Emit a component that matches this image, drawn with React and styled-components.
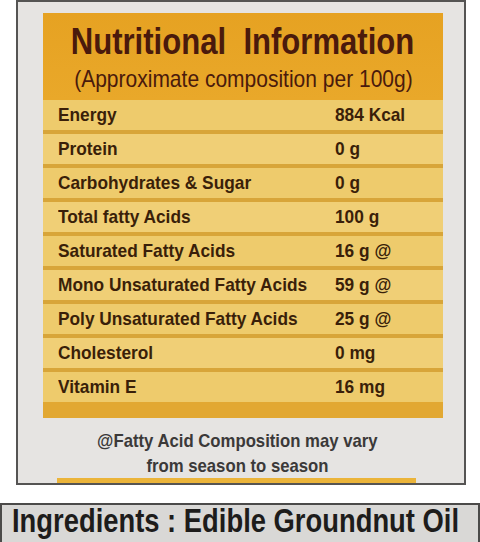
import React from 'react';
import styled, { createGlobalStyle } from 'styled-components';

const GlobalStyle = createGlobalStyle`
    body {
        margin: 0;
        background: #ffffff;
        font-family: "Liberation Sans", Arial, sans-serif;
        overflow: hidden;
    }
`;

const Page = styled.div`
    width: 480px;
    height: 542px;
    overflow: hidden;
`;

const Card = styled.div`
    margin-left: 16px;
    width: 450px;
    box-sizing: border-box;
    border: 2px solid #555453;
    background: #e6e4e2;
    padding-top: 11px;
    display: flex;
    flex-direction: column;
`;

const Panel = styled.div`
    margin-left: 25px;
    width: 400px;
    display: flex;
    flex-direction: column;
`;

const Header = styled.div`
    height: 87px;
    box-sizing: border-box;
    padding-top: 9px;
    background: linear-gradient(180deg, #e6a222 0%, #e9a82a 100%);
    color: #4a1a0c;
    display: flex;
    flex-direction: column;
    align-items: center;
`;

const Squeeze = styled.span`
    display: inline-block;
    white-space: pre;
    transform: scaleX(${p => p.$x});
    transform-origin: ${p => p.$origin || 'center'};
`;

const Title = styled.div`
    font-size: 37px;
    line-height: 40px;
    font-weight: 700;
`;

const Subtitle = styled.div`
    margin-top: 3px;
    font-size: 24px;
    line-height: 28px;
    font-weight: 400;
`;

const Rows = styled.div`
    display: flex;
    flex-direction: column;
    background: #eecb6b;
`;

const Row = styled.div`
    display: grid;
    grid-template-columns: 277px 1fr;
    height: 30px;
    padding-left: 15px;
    font-size: 19px;
    line-height: 30px;
    font-weight: 700;
    color: #3a1f09;
    background: ${p => (p.$light ? '#f0cf76' : '#eecb6c')};
    & + & {
        border-top: 4px solid #d8a539;
    }
`;

const BottomBand = styled.div`
    height: 16px;
    background: #e2a832;
`;

const Note = styled.div`
    margin-top: 10px;
    padding-right: 8px;
    display: flex;
    flex-direction: column;
    align-items: center;
    font-size: 19px;
    line-height: 25px;
    font-weight: 700;
    color: #3b3939;
`;

const Strip = styled.div`
    margin-left: 39px;
    width: 359px;
    height: 5px;
    background: #ebb43a;
`;

const Ingredients = styled.div`
    margin-top: 18px;
    width: 480px;
    box-sizing: border-box;
    border: 2px solid #4b4a49;
    background: #d9d8d6;
    padding: 0 0 10px 10px;
    font-size: 34px;
    line-height: 30px;
    font-weight: 700;
    color: #1d1c1b;
`;

const nutrients = [
    ['Energy', '884 Kcal'],
    ['Protein', '0 g'],
    ['Carbohydrates & Sugar', '0 g'],
    ['Total fatty Acids', '100 g'],
    ['Saturated Fatty Acids', '16 g @'],
    ['Mono Unsaturated Fatty Acids', '59 g @'],
    ['Poly Unsaturated Fatty Acids', '25 g @'],
    ['Cholesterol', '0 mg'],
    ['Vitamin E', '16 mg'],
];

export default function App() {
    return (
        <Page>
            <GlobalStyle />
            <Card>
                <Panel>
                    <Header>
                        <Title><Squeeze $x={0.84}>{'Nutritional  Information'}</Squeeze></Title>
                        <Subtitle><Squeeze $x={0.875}>(Approximate composition per 100g)</Squeeze></Subtitle>
                    </Header>
                    <Rows>
                        {nutrients.map(([label, value], i) => (
                            <Row key={label} $light={i % 2 === 1}>
                                <Squeeze $x={0.91} $origin="left">{label}</Squeeze>
                                <Squeeze $x={0.91} $origin="left">{value}</Squeeze>
                            </Row>
                        ))}
                    </Rows>
                    <BottomBand />
                </Panel>
                <Note>
                    <Squeeze $x={0.88}>@Fatty Acid Composition may vary</Squeeze>
                    <Squeeze $x={0.88}>from season to season</Squeeze>
                </Note>
                <Strip />
            </Card>
            <Ingredients>
                <Squeeze $x={0.805} $origin="left">Ingredients : Edible Groundnut Oil</Squeeze>
            </Ingredients>
        </Page>
    );
}
